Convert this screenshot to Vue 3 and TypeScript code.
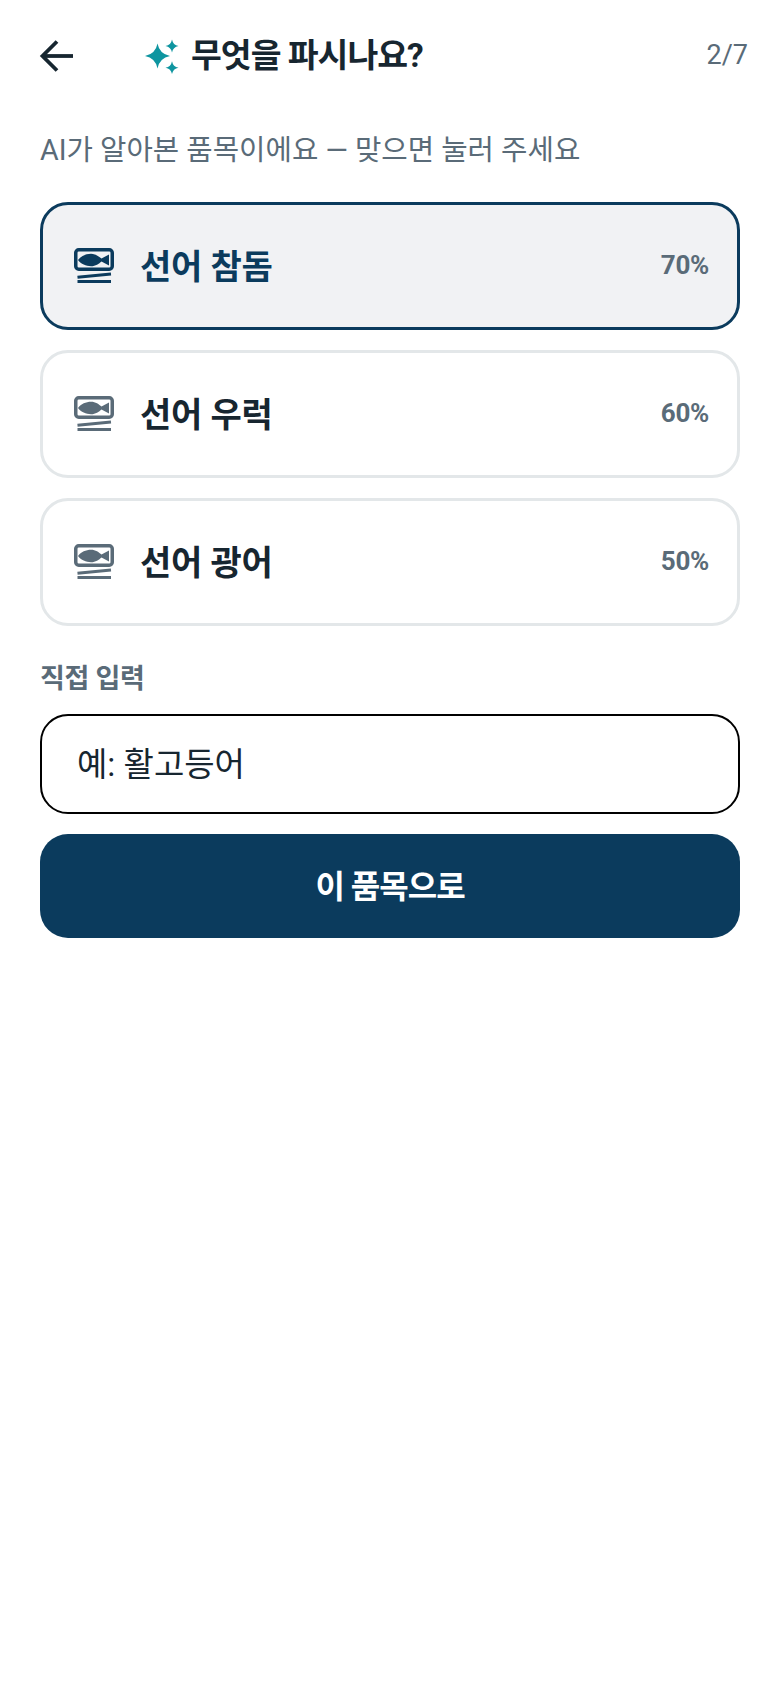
<script setup lang="ts">
interface Item { name: string; pct: number; active?: boolean }

const items: Item[] = [
  { name: '선어 참돔', pct: 70, active: true },
  { name: '선어 우럭', pct: 60 },
  { name: '선어 광어', pct: 50 },
];
</script>

<template>
  <div class="page">
    <header class="top-bar">
      <button class="back" aria-label="뒤로">
        <svg width="40" height="40" viewBox="0 0 40 40" fill="none" stroke="currentColor" stroke-width="3.8">
          <path d="M36 20H6.500" />
          <path d="M20 5.500 5.500 20 20 34.500" />
        </svg>
      </button>
      <div class="title">
        <svg class="sparkle" width="36" height="36" viewBox="0 0 36 36" fill="#0e95a0">
          <path d="M12.500 5.500Q14.500 16 25 18 14.500 20 12.500 30.500 10.500 20 0 18 10.500 16 12.500 5.500Z" />
          <path d="M27 1.500Q28 7 33.500 8 28 9 27 14.500 26 9 20.500 8 26 7 27 1.500Z" />
          <path d="M27 23.200Q28 28.700 33.500 29.700 28 30.700 27 36 26 30.700 20.500 29.700 26 28.700 27 23.200Z" />
        </svg>
        <h1>무엇을 파시나요?</h1>
      </div>
      <span class="step">2/7</span>
    </header>

    <main class="content">
      <p class="hint">AI가 알아본 품목이에요 — 맞으면 눌러 주세요</p>

      <div class="options">
        <button v-for="item in items" :key="item.name" class="option" :class="{ active: item.active }">
          <svg class="fish" width="42" height="38" viewBox="0 0 42 38">
            <rect x="2.750" y="2.750" width="36.500" height="19.500" rx="3" fill="none" stroke="currentColor" stroke-width="3.500" />
            <path d="M5 13C8 9 13 6.800 18 6.800 22.500 6.800 26 9.500 28.500 11.600L36 7.500V18.500L28.500 14.400C26 16.500 22.500 19.200 18 19.200 13 19.200 8 17 5 13Z" fill="currentColor" />
            <path d="M4.500 30.300 38 27" stroke="currentColor" stroke-width="3" />
            <path d="M4.500 34.500H38" stroke="currentColor" stroke-width="3" />
          </svg>
          <span class="name">{{ item.name }}</span>
          <span class="pct">{{ item.pct }}%</span>
        </button>
      </div>

      <label class="field-label" for="manual">직접 입력</label>
      <input id="manual" class="manual" type="text" placeholder="예: 활고등어" />
      <button class="submit"><span>이 품목으로</span></button>
    </main>
  </div>
</template>

<style>
html, body { background: #fff; }
</style>

<style scoped>
* { box-sizing: border-box; margin: 0; padding: 0; }

.page {
  width: 780px;
  min-height: 1688px;
  background: #fff;
  color: #172630;
  font-family: Roboto, "Noto Sans CJK KR", sans-serif;
}

.top-bar {
  display: flex;
  align-items: center;
  height: 112px;
  padding: 0 32px 0 37px;
}
.back {
  display: flex;
  width: 40px;
  height: 40px;
  background: none;
  border: none;
  color: #172630;
}
.title {
  flex: 1;
  display: flex;
  align-items: center;
  gap: 10px;
  margin-left: 68px;
}
.sparkle { flex-shrink: 0; }
.title h1 {
  font-size: 33.500px;
  line-height: 40px;
  font-weight: 700;
  letter-spacing: -1px;
}
.step { font-size: 27px; color: #5a6b78; margin-bottom: 2px; }

.content { padding: 0 40px; }

.hint {
  font-size: 28.700px;
  line-height: 40px;
  color: #5a6b78;
  margin-top: 18px;
  margin-bottom: 32px;
}

.options { display: flex; flex-direction: column; gap: 20px; }
.option {
  display: flex;
  align-items: center;
  height: 128px;
  padding: 0 28px 0 30px;
  background: #fff;
  border: 3px solid #e3e7e9;
  border-radius: 28px;
  color: #5a6b78;
  font-family: inherit;
  text-align: left;
}
.option.active { background: #f1f2f4; border-color: #0b3b5d; color: #0b3b5d; }
.fish { flex-shrink: 0; }
.name {
  flex: 1;
  margin-left: 25px;
  margin-top: 2px;
  font-size: 34px;
  line-height: 40px;
  font-weight: 700;
  letter-spacing: -0.200px;
  color: #172630;
}
.option.active .name { color: #0b3b5d; }
.pct { font-size: 26px; font-weight: 700; letter-spacing: -0.300px; color: #5a6b78; margin-bottom: 2px; }

.field-label {
  display: block;
  margin-top: 35px;
  font-size: 27px;
  line-height: 36px;
  font-weight: 700;
  letter-spacing: -0.300px;
  color: #5a6b78;
}
.manual {
  display: block;
  width: 100%;
  height: 100px;
  margin-top: 17px;
  padding: 0 35px;
  border: 2px solid #000;
  border-radius: 28px;
  outline: none;
  background: #fff;
  font-family: inherit;
  font-size: 33px;
  color: #172630;
}
.manual::placeholder { color: #172630; opacity: 1; }
.submit {
  display: flex;
  align-items: center;
  justify-content: center;
  width: 100%;
  height: 104px;
  margin-top: 20px;
  border: none;
  border-radius: 28px;
  background: #0b3b5d;
  color: #fff;
  font-family: inherit;
  font-size: 32px;
  font-weight: 700;
  letter-spacing: -1px;
}
.submit span { margin-bottom: 4px; }
</style>
